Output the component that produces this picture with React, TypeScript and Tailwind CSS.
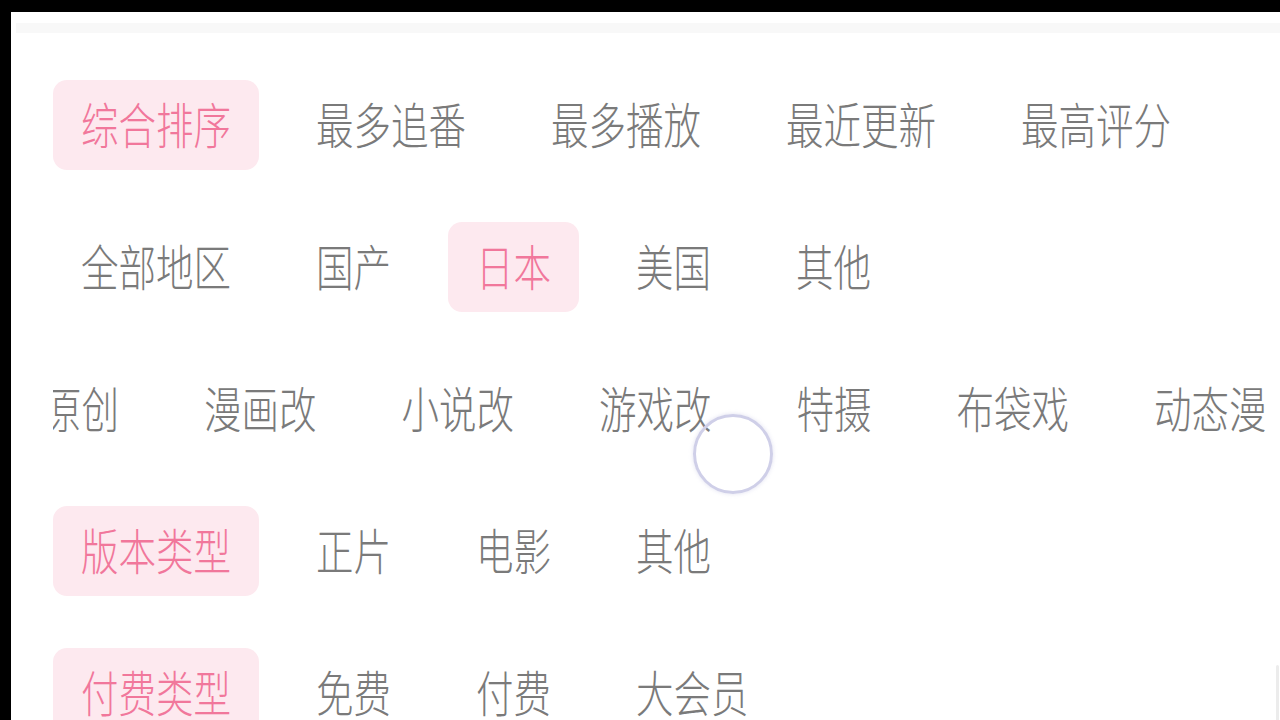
import React from "react";

type Item = { label: string; active?: boolean };

const rows: Item[][] = [
  [
    { label: "综合排序", active: true },
    { label: "最多追番" },
    { label: "最多播放" },
    { label: "最近更新" },
    { label: "最高评分" },
  ],
  [
    { label: "全部地区" },
    { label: "国产" },
    { label: "日本", active: true },
    { label: "美国" },
    { label: "其他" },
  ],
];

const row3: Item[] = [
  { label: "原创" },
  { label: "漫画改" },
  { label: "小说改" },
  { label: "游戏改" },
  { label: "特摄" },
  { label: "布袋戏" },
  { label: "动态漫" },
  { label: "其他" },
];

const row4: Item[] = [
  { label: "版本类型", active: true },
  { label: "正片" },
  { label: "电影" },
  { label: "其他" },
];

const row5: Item[] = [
  { label: "付费类型", active: true },
  { label: "免费" },
  { label: "付费" },
  { label: "大会员" },
];

function Chip({ item }: { item: Item }) {
  return (
    <div
      className={`flex h-[90px] shrink-0 items-center rounded-[14px] px-[28px] ${
        item.active ? "bg-[#fde9ef] text-[#f1779b]" : "text-[#7a7a7a]"
      }`}
    >
      <span className="inline-block -translate-y-[2px] scale-y-[1.3] whitespace-nowrap text-[37.5px] font-light leading-none">
        {item.label}
      </span>
    </div>
  );
}

function Row({ items }: { items: Item[] }) {
  return (
    <div className="flex gap-[29px] pl-[42px]">
      {items.map((it, i) => (
        <Chip key={i} item={it} />
      ))}
    </div>
  );
}

export default function App() {
  return (
    <div
      className="relative flex h-[720px] w-[1280px] flex-col overflow-hidden bg-black"
      style={{ fontFamily: '"Noto Sans CJK SC", "Noto Sans", sans-serif' }}
    >
      <div className="h-[12px] shrink-0 bg-black" />
      <div className="flex min-h-0 flex-1">
        <div className="w-[11px] shrink-0 bg-black" />
        <div className="relative flex min-w-0 flex-1 flex-col overflow-hidden bg-white">
          <div className="mt-[11px] ml-[5px] h-[10px] shrink-0 bg-[#f8f8f8]" />
          <div className="mt-[47px] flex flex-col gap-[52px]">
            {rows.map((r, i) => (
              <Row key={i} items={r} />
            ))}
            <div className="ml-[42px] overflow-hidden">
              <div className="-ml-[37px] flex w-max gap-[29px]">
                {row3.map((it, i) => (
                  <Chip key={i} item={it} />
                ))}
              </div>
            </div>
            <Row items={row4} />
            <Row items={row5} />
          </div>
          <div className="absolute right-[1px] top-[653px] h-[60px] w-[3px] rounded-full bg-[#ececec]" />
        </div>
      </div>
      <div className="absolute left-[693px] top-[414px] h-[80px] w-[80px] rounded-full border-[3px] border-[#cfcfe8] shadow-[0_0_4px_rgba(180,180,220,0.4)]" />
    </div>
  );
}
